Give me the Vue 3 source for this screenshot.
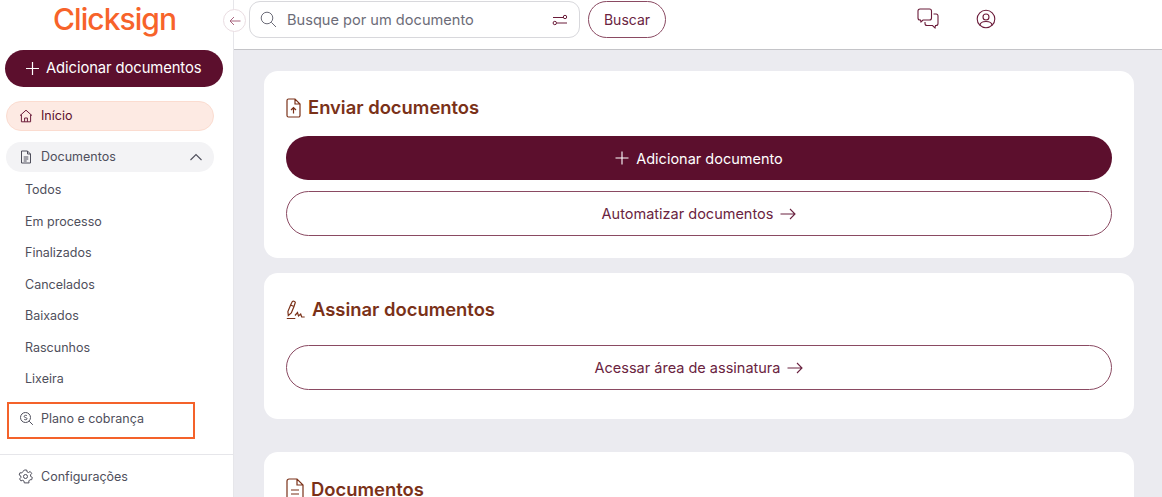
<script setup>
const subItems = ['Todos', 'Em processo', 'Finalizados', 'Cancelados', 'Baixados', 'Rascunhos', 'Lixeira']
</script>

<template>
  <div class="shell">
    <aside class="sidebar">
      <div class="logo">Clicksign</div>
      <button class="add-btn">
        <svg width="15" height="15" viewBox="0 0 15 15" fill="none" stroke="currentColor" stroke-width="1.2"><path d="M7.5 1v13M1 7.5h13" /></svg>
        Adicionar documentos
      </button>
      <div class="nav-pill home">
        <svg width="14" height="14" viewBox="0 0 14 14" fill="none" stroke="#6b1c3a" stroke-width="1"><path d="M1 6.6 7 1.2l6 5.4M2.4 5.6v7.2h9.2V5.6M5.6 12.8V9h2.8v3.8" /></svg>
        <span>Início</span>
      </div>
      <div class="nav-pill docs">
        <svg width="14" height="14" viewBox="0 0 14 14" fill="none" stroke="#4f4f5c" stroke-width="1"><path d="M2.5 1h6l3 3v9h-9zM8.5 1v3h3M4.7 7h4.6M4.7 9h4.6M4.7 11h3" /></svg>
        <span>Documentos</span>
        <svg class="chev" width="14" height="8" viewBox="0 0 14 8" fill="none" stroke="#4f4f5c" stroke-width="1.1"><path d="M1.5 7 7 1.5 12.5 7" /></svg>
      </div>
      <ul class="sub-list">
        <li v-for="item in subItems" :key="item">{{ item }}</li>
      </ul>
      <div class="plan-box">
        <svg width="15" height="15" viewBox="0 0 15 15" fill="none" stroke="#4f4f5c" stroke-width="1"><circle cx="6.5" cy="6.5" r="5" /><path d="m10.2 10.2 3.6 3.6M8 4.8c-.4-.6-2.800-.9-2.800.7 0 1.500 2.800.7 2.800 2.200 0 1.500-2.400 1.100-2.900.5" /></svg>
        <span>Plano e cobrança</span>
      </div>
      <div class="side-foot">
        <svg width="15" height="15" viewBox="0 0 15 15" fill="none" stroke="#4f4f5c" stroke-width="1"><circle cx="7.5" cy="7.5" r="2" /><path d="M6.3 1h2.400l.4 1.900 1.400.6 1.700-1 1.500 1.900-1.200 1.500.2 1.600 1.600.9-.6 2.300-1.900.1-1 1.200.2 1.900H6.300l-.3-1.800-1.300-.8-1.800.6-1.300-2 1.300-1.400-.1-1.500-1.600-1 .7-2.200 1.900.1 1-1.100z" /></svg>
        <span>Configurações</span>
      </div>
    </aside>

    <button class="collapse">
      <svg width="12" height="10" viewBox="0 0 12 10" fill="none" stroke="#a8657f" stroke-width="1"><path d="M11.5 5H1M5 1 1 5l4 4" /></svg>
    </button>

    <div class="content">
      <header class="topbar">
        <div class="search">
          <svg width="17" height="17" viewBox="0 0 17 17" fill="none" stroke="#6c6c78" stroke-width="1"><circle cx="7" cy="7" r="5.8" /><path d="m11.3 11.3 4.700 4.700" /></svg>
          <span class="placeholder">Busque por um documento</span>
          <svg class="filter" width="16" height="12" viewBox="0 0 16 12" fill="none" stroke="#6b1c3a" stroke-width="1"><path d="M1 3.5h10M5 9h10" /><circle cx="13" cy="3" r="1.7" /><circle cx="2.8" cy="9" r="1.7" /></svg>
        </div>
        <button class="search-btn">Buscar</button>
        <div class="top-icons">
          <svg width="22" height="22" viewBox="0 0 22 22" fill="none" stroke="#6b1c3a" stroke-width="1.1"><path d="M3 1h9.500A2 2 0 0 1 14.500 3v7a2 2 0 0 1-2 2H6l-2 2-.5-2H3a2 2 0 0 1-2-2V3a2 2 0 0 1 2-2z" /><path d="M16.500 6H19a1.800 1.800 0 0 1 2 2v7.500a2 2 0 0 1-2 2h-.5l-.5 2.500-2.500-2.500H10a2 2 0 0 1-2-2V14" /></svg>
          <svg width="20" height="20" viewBox="0 0 20 20" fill="none" stroke="#6b1c3a" stroke-width="1.1"><circle cx="10" cy="10" r="8.8" /><circle cx="10" cy="8" r="3" /><path d="M4 16.500c0-3 2.500-4 6-4s6 1 6 4" /></svg>
        </div>
      </header>

      <main class="main">
        <section class="card send">
          <h2>
            <svg width="15" height="20" viewBox="0 0 15 20" fill="none" stroke="#7a3118" stroke-width="1.2"><path d="M2.500 1h6.500l5 5v11.500a1.500 1.500 0 0 1-1.500 1.500h-10A1.500 1.500 0 0 1 1 17.500v-15A1.500 1.500 0 0 1 2.500 1zM9 1v5h5M7.500 15.500v-6M5 12l2.500-2.500L10 12" /></svg>
            Enviar documentos
          </h2>
          <button class="wide solid">
            <svg width="14" height="14" viewBox="0 0 14 14" fill="none" stroke="currentColor" stroke-width="1.1"><path d="M7 .5v13M.5 7h13" /></svg>
            Adicionar documento
          </button>
          <button class="wide outline">
            Automatizar documentos
            <svg class="arrow" width="16" height="12" viewBox="0 0 16 12" fill="none" stroke="currentColor" stroke-width="1.1"><path d="M.5 6h14.500M10 1l5 5-5 5" /></svg>
          </button>
        </section>

        <section class="card sign">
          <h2>
            <svg width="20" height="20" viewBox="0 0 20 20" fill="none" stroke="#7a3118" stroke-width="1.2"><path d="M6.300 1.600c.9-.9 2.600-.4 3 .9L8 6.500 5.300 13 2.300 15.500 1.900 11.500 4.600 5zM4.600 5l3.400 1.500M.8 18.500h8.500M9 15.500l2.500-3 1 3.500 2.200-2 1 3h3" /></svg>
            Assinar documentos
          </h2>
          <button class="wide outline">
            Acessar área de assinatura
            <svg class="arrow" width="16" height="12" viewBox="0 0 16 12" fill="none" stroke="currentColor" stroke-width="1.1"><path d="M.5 6h14.500M10 1l5 5-5 5" /></svg>
          </button>
        </section>

        <section class="card docs-card">
          <h2>
            <svg width="18" height="22" viewBox="0 0 18 22" fill="none" stroke="#7a3118" stroke-width="1.2"><path d="M3 1h8l6 6v12a2 2 0 0 1-2 2H3a2 2 0 0 1-2-2V3a2 2 0 0 1 2-2zM11 1v6h6M5 12h8M5 16h8" /></svg>
            Documentos
          </h2>
        </section>
      </main>
    </div>
  </div>
</template>

<style>
html, body {
  margin: 0;
  overflow: hidden;
}
</style>

<style scoped>
.shell {
  display: flex;
  position: relative;
  width: 1162px;
  height: 497px;
  overflow: hidden;
  background: #fff;
  font-family: Inter, "Liberation Sans", sans-serif;
  color: #4f4f5c;
}

.sidebar {
  width: 234px;
  flex-shrink: 0;
  box-sizing: border-box;
  border-right: 1px solid #e6e6ea;
  display: flex;
  flex-direction: column;
  padding: 0 20px 0 5px;
}

.logo {
  height: 38px;
  margin-bottom: 12px;
  padding-left: 48px;
  font-size: 30px;
  line-height: 38px;
  font-weight: 500;
  letter-spacing: -.95px;
  color: #f7632a;
}

.add-btn {
  display: flex;
  align-items: center;
  gap: 6px;
  width: 218px;
  height: 37px;
  padding: 0 0 0 20px;
  border: none;
  border-radius: 19px;
  background: #5c0f2d;
  color: #fff;
  font: 14.8px Inter, sans-serif;
  letter-spacing: -.1px;
  margin-bottom: 14px;
}

.nav-pill {
  display: flex;
  align-items: center;
  gap: 8px;
  width: 208px;
  height: 30px;
  box-sizing: border-box;
  margin-left: 1px;
  padding-left: 12px;
  border-radius: 15px;
  font-size: 12.5px;
}

.home {
  background: #fdeae3;
  border: 1px solid #fbdcd0;
  color: #5c0f2d;
  margin-bottom: 11px;
}

.docs {
  background: #f3f3f5;
  padding-left: 13px;
}

.chev {
  margin-left: auto;
  margin-right: 11px;
}

.sub-list {
  list-style: none;
  margin: 2.5px 0 0;
  padding: 0 0 0 20px;
  font-size: 12.5px;
}

.sub-list li {
  height: 31.5px;
  line-height: 31.5px;
}

.plan-box {
  display: flex;
  align-items: center;
  gap: 7px;
  width: 188px;
  height: 37px;
  box-sizing: border-box;
  margin: 7.5px 0 0 2px;
  padding: 0 0 4px 10px;
  border: 2px solid #f4622a;
  font-size: 12.5px;
}

.side-foot {
  display: flex;
  align-items: center;
  gap: 8px;
  margin: 15px -20px 0 -5px;
  padding: 0 0 0 18px;
  height: 42px;
  border-top: 1px solid #e6e6ea;
  font-size: 12.5px;
}

.collapse {
  position: absolute;
  left: 223px;
  top: 9px;
  width: 23px;
  height: 23px;
  padding: 0;
  display: flex;
  align-items: center;
  justify-content: center;
  border: 1px solid #eadde2;
  border-radius: 50%;
  background: #fff;
}

.content {
  flex: 1;
  min-width: 0;
  display: flex;
  flex-direction: column;
}

.topbar {
  height: 50px;
  flex-shrink: 0;
  box-sizing: border-box;
  display: flex;
  align-items: flex-start;
  padding: 1px 0 0 15px;
  background: #fff;
  border-bottom: 1px solid #c4c4c8;
}

.search {
  display: flex;
  align-items: center;
  width: 331px;
  height: 37px;
  box-sizing: border-box;
  padding: 0 11px 0 10px;
  border: 1px solid #d8d8dc;
  border-radius: 11px;
}

.placeholder {
  margin-left: 10px;
  font-size: 14.6px;
  color: #6c6c78;
}

.filter {
  margin-left: auto;
}

.search-btn {
  width: 78px;
  height: 37px;
  margin-left: 8px;
  padding: 0;
  border: 1px solid #8a4a62;
  border-radius: 19px;
  background: #fff;
  color: #6a2340;
  font: 14px Inter, sans-serif;
}

.top-icons {
  display: flex;
  align-items: center;
  gap: 37px;
  margin: 7px 0 0 251px;
}

.main {
  flex: 1;
  min-height: 0;
  overflow: hidden;
  background: #ebebf0;
  padding: 21px 28px 0 30px;
}

.card {
  box-sizing: border-box;
  background: #fff;
  border-radius: 14px;
  padding: 26px 22px 0;
}

.card h2 {
  display: flex;
  align-items: center;
  gap: 7px;
  margin: 0;
  font-size: 18.4px;
  line-height: 21px;
  font-weight: 600;
  color: #7a3118;
}

.send {
  height: 187px;
  margin-bottom: 15px;
}

.send h2 {
  margin-bottom: 18px;
}

.sign {
  height: 146px;
  margin-bottom: 33px;
}

.sign h2 {
  gap: 6px;
  margin-bottom: 25px;
}

.docs-card {
  height: 120px;
}

.wide {
  display: flex;
  align-items: center;
  justify-content: center;
  gap: 7px;
  width: 100%;
  height: 45px;
  padding: 0;
  border-radius: 23px;
  font: 14.5px Inter, sans-serif;
}

.solid {
  height: 44px;
  border: none;
  background: #5c0f2d;
  color: #fff;
}

.outline {
  border: 1px solid #8a4a62;
  background: #fff;
  color: #6a2340;
}

.send .outline {
  margin-top: 11px;
}
</style>
